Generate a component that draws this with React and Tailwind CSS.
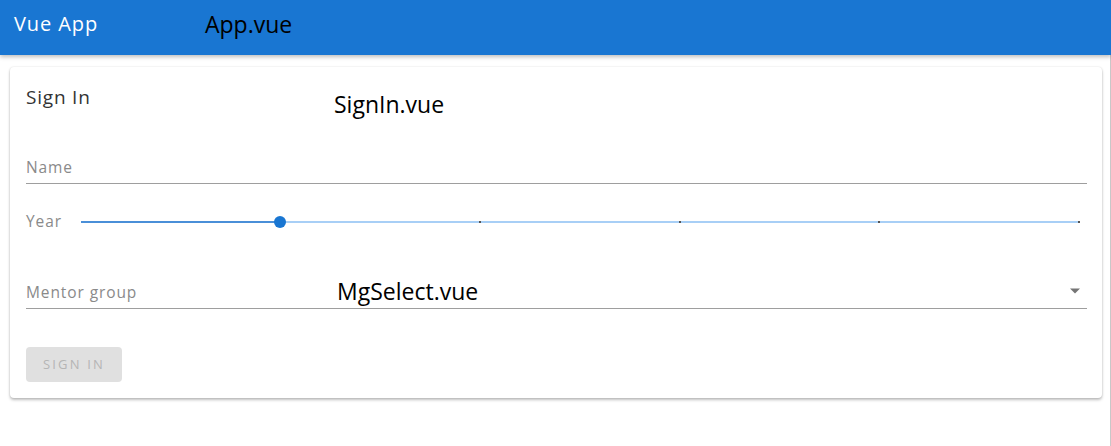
import React from 'react';

const ticks = [2, 3, 4, 5];
const ui = { fontFamily: '"Open Sans", sans-serif' };
const note = { fontFamily: '"Open Sans", sans-serif' };

const App = () => {
    return (
        <div className="w-[1111px] h-[446px] bg-white overflow-hidden flex flex-col" style={ui}>
            <header className="h-[55px] bg-[#1976d2] flex items-start pt-[10px] shadow-[0_2px_4px_rgba(0,0,0,0.25)] relative z-10 shrink-0">
                <span className="ml-[14px] w-[191px] text-white text-[20px] tracking-[0.9px] leading-[28px]">Vue App</span>
                <span className="text-black text-[23px] leading-[28px]" style={note}>App.vue</span>
            </header>

            <div className="flex-1 flex border-r border-[#c8c8c8]">
                <div className="mt-[12px] ml-[10px] w-[1092px] h-[331px] bg-white rounded-[4px] shadow-[0_2px_3px_rgba(0,0,0,0.25),0_0_2px_rgba(0,0,0,0.12)] px-[16px] flex flex-col">
                    <div className="flex items-start h-[45px] pt-[18px]">
                        <span className="w-[308px] text-[19px] text-[#333] tracking-[0.8px] leading-[24px]">Sign In</span>
                        <span className="text-[23px] text-black leading-[28px] mt-[5px]" style={note}>SignIn.vue</span>
                    </div>

                    {/* Name field */}
                    <div className="mt-[46px] w-[1061px] border-b border-[#9e9e9e] h-[26px] flex items-start pt-[2px]">
                        <span className="text-[15.5px] text-[#8a8a8a] tracking-[0.9px] leading-none">Name</span>
                    </div>

                    {/* Year slider */}
                    <div className="mt-[24px] flex items-center h-[28px]">
                        <span className="text-[15.5px] text-[#8a8a8a] tracking-[0.9px] w-[55px] -mt-[1px]">Year</span>
                        <div className="relative w-[998px] h-[2px] bg-[#a8cff6]">
                            <div className="absolute left-0 top-0 h-[2px] w-[199px] bg-[#4a8fd8]" />
                            {ticks.map((t) => (
                                <div
                                    key={t}
                                    className="absolute top-0 w-[2px] h-[2px] bg-[#555]"
                                    style={{ left: `${(t / 5) * 998 - 1}px` }}
                                />
                            ))}
                            <div className="absolute left-[193px] -top-[5px] w-[12px] h-[12px] rounded-full bg-[#1976d2]" />
                        </div>
                    </div>

                    {/* Mentor group select */}
                    <div className="mt-[46px] w-[1061px] border-b border-[#9e9e9e] h-[27px] flex items-start relative pt-[3px]">
                        <span className="w-[311px] text-[15.5px] text-[#8a8a8a] tracking-[0.9px] leading-none">Mentor group</span>
                        <span className="-mt-[5px] text-[23px] text-black leading-none" style={note}>MgSelect.vue</span>
                        <svg className="absolute right-[7px] top-[6px]" width="10" height="6" viewBox="0 0 10 5">
                            <path d="M0 0 L10 0 L5 5 Z" fill="#757575" />
                        </svg>
                    </div>

                    {/* Button */}
                    <button className="mt-[38px] w-[96px] h-[35px] bg-[#e0e0e0] rounded-[4px] text-[13px] tracking-[2.2px] text-[#b5b5b5] font-medium">
                        SIGN IN
                    </button>
                </div>
            </div>
        </div>
    );
};

export default App;
